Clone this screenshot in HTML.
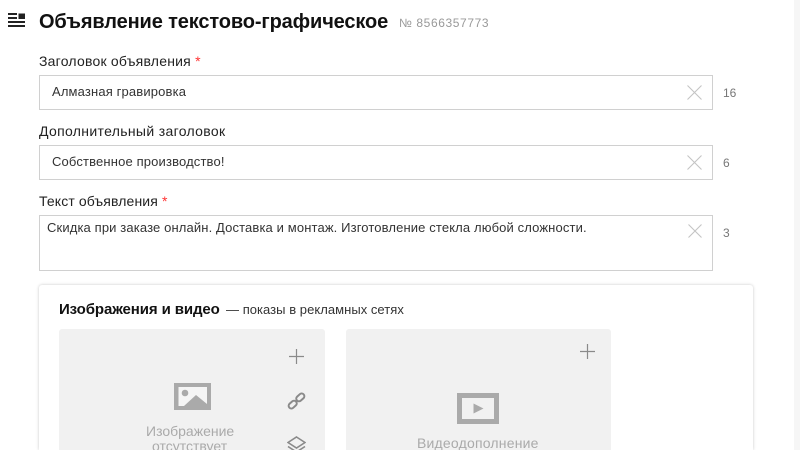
<!DOCTYPE html>
<html lang="ru"><head><meta charset="utf-8"><title>Объявление</title>
<style>
html,body{margin:0;padding:0;background:#fff;width:800px;height:450px;overflow:hidden}
#p{position:relative;width:800px;height:450px;overflow:hidden;font-family:"Liberation Sans","DejaVu Sans",sans-serif;color:#222;background:#fff}
.t{position:absolute;white-space:nowrap;line-height:16px}
.inp{position:absolute;left:39px;width:672px;border:1px solid #d0d0d0;background:#fff}
.lbl{font-size:14px;color:#222;left:39px;letter-spacing:.22px}
.val{font-size:13px;color:#333;letter-spacing:.15px}
.cnt{font-size:12px;color:#777;left:723px}
.star{color:#f33}
svg{position:absolute;overflow:visible}
.box{position:absolute;background:#f1f1f1;border-radius:3px 3px 0 0;top:329px;height:121px}
</style></head><body><div id="p">
<div style="position:absolute;left:794px;top:0;width:6px;height:450px;background:#f6f6f6"></div>

<svg style="left:8px;top:13px" width="17" height="14" viewBox="0 0 17 14" fill="#222"><rect x="0" y="0" width="9" height="2"/><rect x="10.500" y="0.500" width="6.500" height="5.500"/><rect x="0" y="4" width="9" height="2"/><rect x="0" y="8" width="17" height="2"/><rect x="0" y="12" width="17" height="2"/></svg>

<div class="t" style="left:39px;top:13px;font-size:20px;font-weight:bold;color:#111;line-height:18px;letter-spacing:-.13px">Объявление текстово-графическое</div>
<div class="t" style="left:399px;top:15px;font-size:12px;color:#999;letter-spacing:.6px">№ 8566357773</div>

<div class="t lbl" style="top:53px">Заголовок объявления <span class="star">*</span></div>
<div class="inp" style="top:75px;height:33px"></div>
<div class="t val" style="left:52px;top:84px">Алмазная гравировка</div>
<svg style="left:687px;top:85px" width="15" height="15" stroke="#c4c4c4" stroke-width="1.1" fill="none"><path d="M.5.5l14 14M14.500 .5l-14 14"/></svg>
<div class="t cnt" style="top:85px">16</div>

<div class="t lbl" style="top:123px;letter-spacing:.33px">Дополнительный заголовок</div>
<div class="inp" style="top:145px;height:33px"></div>
<div class="t val" style="left:52px;top:154px">Собственное производство!</div>
<svg style="left:687px;top:155px" width="15" height="15" stroke="#c4c4c4" stroke-width="1.1" fill="none"><path d="M.5.5l14 14M14.500 .5l-14 14"/></svg>
<div class="t cnt" style="top:155px">6</div>

<div class="t lbl" style="top:193px;letter-spacing:.12px">Текст объявления <span class="star">*</span></div>
<div class="inp" style="top:215px;height:54px"></div>
<div class="t val" style="left:47px;top:220px;letter-spacing:.13px">Скидка при заказе онлайн. Доставка и монтаж. Изготовление стекла любой сложности.</div>
<svg style="left:688px;top:224px" width="14" height="14" stroke="#c4c4c4" stroke-width="1.1" fill="none"><path d="M.5.5l13 13M13.500 .5l-13 13"/></svg>
<div class="t cnt" style="top:225px">3</div>

<div style="position:absolute;left:39px;top:285px;width:714px;height:165px;background:#fff;border-radius:3px 3px 0 0;box-shadow:0 0 3px rgba(0,0,0,.22)"></div>
<div class="t" style="left:59px;top:302px;font-size:15px;font-weight:bold;color:#111;letter-spacing:-.1px">Изображения и видео</div>
<div class="t" style="left:226px;top:302px;font-size:13px;color:#333;letter-spacing:.04px">— показы в рекламных сетях</div>

<div class="box" style="left:59px;width:266px"></div>
<div class="box" style="left:346px;width:265px"></div>

<svg style="left:289px;top:349px" width="15" height="15" stroke="#8a8a8a" stroke-width="1.2" fill="none"><path d="M7.500 0v15M0 7.500h15"/></svg>
<svg style="left:174px;top:383px" width="37" height="27" viewBox="0 0 37 27"><rect width="37" height="27" fill="#aaa"/><rect x="4.500" y="4" width="28.500" height="19" fill="#f5f5f5"/><circle cx="11" cy="10" r="3.300" fill="#aaa"/><path d="M10 23l12-11 11 9v2z" fill="#aaa"/></svg>
<svg style="left:288px;top:393px" width="17" height="16" viewBox="0 0 17 16" fill="none" stroke="#8a8a8a" stroke-width="2"><rect x="7.800" y="1.700" width="9" height="5.400" rx="2.700" transform="rotate(-42 12.300 4.400)"/><rect x=".2" y="8.900" width="9" height="5.400" rx="2.700" transform="rotate(-42 4.700 11.600)"/></svg>
<svg style="left:287px;top:436px;overflow:hidden" width="19" height="14" viewBox="0 0 19 14" fill="none" stroke="#8a8a8a" stroke-width="1.600"><path d="M9.500 1l8.500 5.500-8.500 5.500-8.500-5.500z"/><path d="M1 10.500l8.500 5.500 8.500-5.500"/></svg>
<div class="t" style="left:146px;top:423px;font-size:14px;color:#aaa">Изображение</div>
<div class="t" style="left:152px;top:438px;height:12px;overflow:hidden;font-size:14px;color:#aaa">отсутствует</div>

<svg style="left:580px;top:344px" width="15" height="15" stroke="#8a8a8a" stroke-width="1.2" fill="none"><path d="M7.500 0v15M0 7.500h15"/></svg>
<svg style="left:457px;top:393px" width="42" height="31" viewBox="0 0 42 31"><rect width="42" height="31" fill="#aaa"/><rect x="5" y="5" width="32" height="21" fill="#f1f1f1"/><path d="M16.500 10.500v10l10-5z" fill="#aaa"/></svg>
<div class="t" style="left:417px;top:435px;height:15px;overflow:hidden;font-size:14px;color:#aaa;letter-spacing:.2px">Видеодополнение</div>
</div></body></html>
